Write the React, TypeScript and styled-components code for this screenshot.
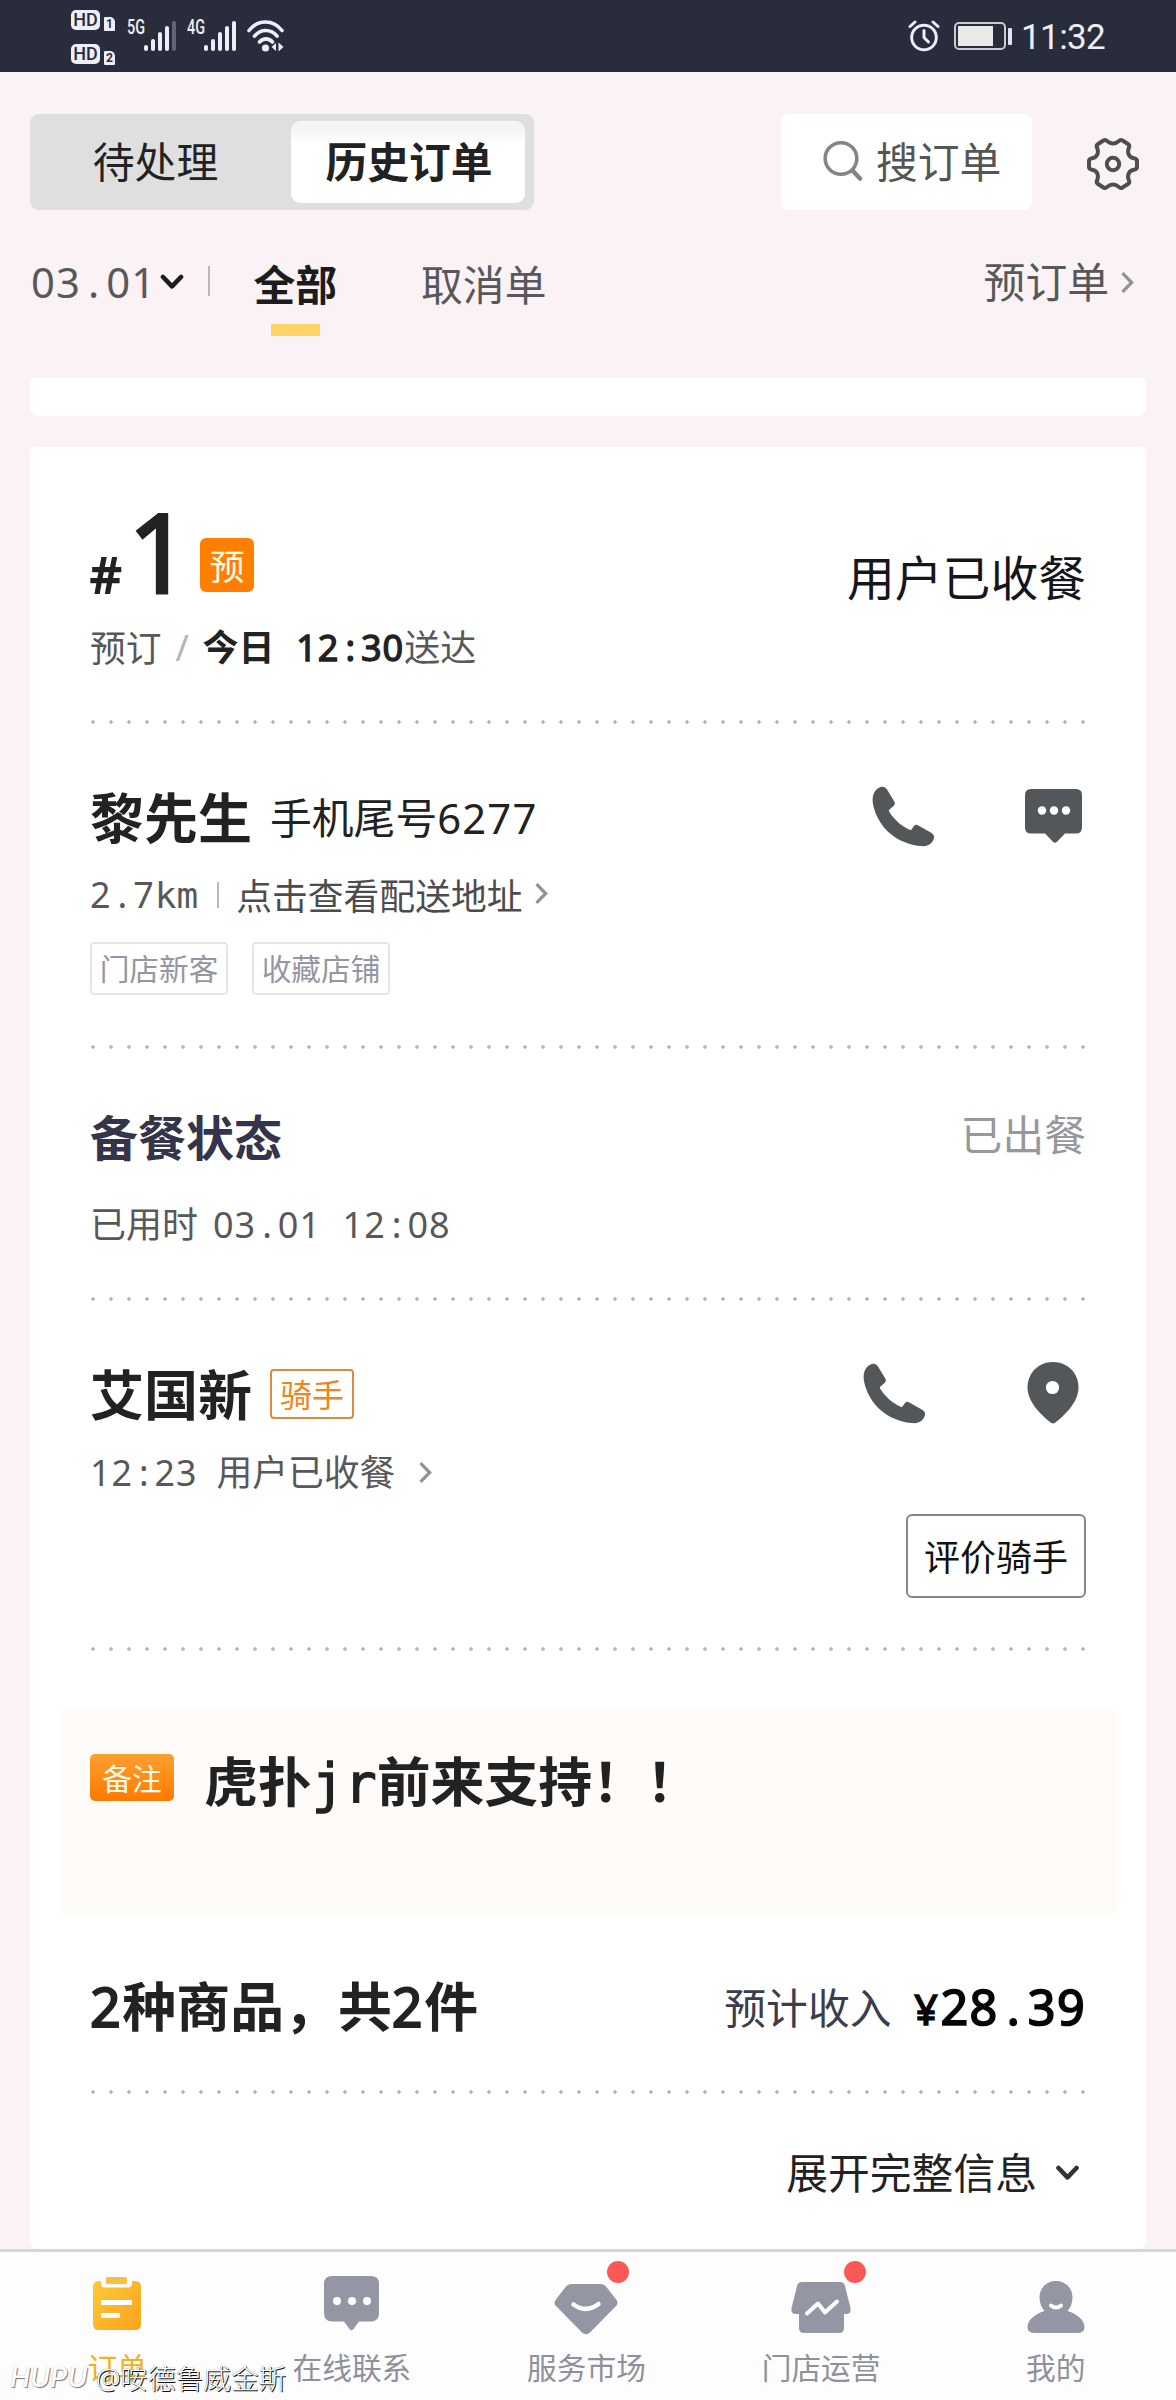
import React from "react";
import styled, { createGlobalStyle, css } from "styled-components";

const GlobalStyle = createGlobalStyle`
  * { box-sizing: border-box; }
  body {
    margin: 0;
    background: #fbf2f5;
    font-family: "Noto Sans", "Noto Sans CJK SC", sans-serif;
    color: #222;
  }
`;

const Screen = styled.div`
  width: 1176px;
  height: 2400px;
  display: flex;
  flex-direction: column;
  overflow: hidden;
  position: relative;
`;

/* ---------- shared text ---------- */

interface LabelProps {
  $size?: number;
  $color?: string;
  $bold?: boolean;
  $line?: number;
}

const Label = styled.span<LabelProps>`
  font-size: ${(p) => p.$size ?? 41.8}px;
  line-height: ${(p) => p.$line ?? 50}px;
  color: ${(p) => p.$color ?? "#222"};
  font-weight: ${(p) => (p.$bold ? 700 : 400)};
  white-space: pre;
`;

const emboldened = css`
  font-weight: 400;
  -webkit-text-stroke: 0.036em currentColor;
`;

const Digits = styled.span<{ $strong?: boolean }>`
  letter-spacing: 0.028em;
  ${(p) => p.$strong && emboldened}
`;

const Cell = styled.span<{ $strong?: boolean }>`
  display: inline-block;
  width: 0.6em;
  text-align: center;
  ${(p) => p.$strong && emboldened}
`;

const Latin = styled.span<{ $strong?: boolean }>`
  font-family: "DejaVu Sans Mono", monospace;
  font-weight: 400;
  ${(p) => p.$strong && css`-webkit-text-stroke: 0.024em currentColor;`}
`;

/* Fixed-pitch text: every latin character takes 0.6em. */
function Mono({ children, strong }: { children: string; strong?: boolean }) {
  const parts = children.match(/\d+|[a-z]+|[^\da-z]/g) ?? [];
  return (
    <>
      {parts.map((part, i) => {
        if (/\d/.test(part)) return <Digits key={i} $strong={strong}>{part}</Digits>;
        if (/[a-z]/.test(part)) return <Latin key={i} $strong={strong}>{part}</Latin>;
        return <Cell key={i} $strong={strong}>{part}</Cell>;
      })}
    </>
  );
}

/* ---------- status bar ---------- */

const StatusBar = styled.header`
  height: 72px;
  flex: none;
  background: #292c3a;
  display: flex;
  justify-content: space-between;
  padding: 0 71px 0 71px;
  color: #eeeefa;
`;

const StatusLeft = styled.div`
  display: flex;
  align-items: flex-start;
`;

const HdStack = styled.div`
  display: flex;
  flex-direction: column;
  gap: 13px;
  padding-top: 10px;
  width: 56px;
`;

const HdRow = styled.div`
  display: flex;
  align-items: flex-end;
  gap: 4px;
  height: 21px;
`;

const HdBox = styled.span`
  width: 29px;
  height: 20px;
  border-radius: 5px;
  background: #eeeefa;
  color: #292c3a;
  font: 500 18px/20px Roboto, sans-serif;
  text-align: center;
  margin-bottom: 1px;
`;

const SimBox = styled.span`
  width: 11px;
  height: 14px;
  border-radius: 1px 5px 1px 1px;
  background: #eeeefa;
  color: #292c3a;
  font: 700 12px/14px Roboto, sans-serif;
  text-align: center;
`;

const NetType = styled.span`
  font: 500 19.5px/20px Roboto, sans-serif;
  width: 17px;
  margin-top: 18px;
  span {
    display: inline-block;
    transform: scaleX(0.74);
    transform-origin: left;
  }
`;

const Bars = styled.div`
  display: flex;
  align-items: flex-end;
  gap: 3px;
  height: 31px;
  margin: 20px 11px 0 0;
`;

const Bar = styled.i<{ $h: number; $off?: boolean }>`
  width: 4px;
  height: ${(p) => p.$h}px;
  border-radius: 2px;
  background: ${(p) => (p.$off ? "#626573" : "#eeeefa")};
`;

const StatusRight = styled.div`
  display: flex;
  align-items: center;
`;

const Battery = styled.div`
  width: 52px;
  height: 28px;
  margin: 0 2px 0 14px;
  border: 2px solid #c9cad4;
  border-radius: 5px;
  padding: 2px;
  i {
    display: block;
    width: 35px;
    height: 20px;
    background: #e9e9e9;
  }
`;

const BatteryCap = styled.i`
  width: 4px;
  height: 17px;
  border-radius: 1px;
  background: #e4e4ef;
`;

const Clock = styled.span`
  font: 400 35px/40px Roboto, sans-serif;
  margin: 3px 0 0 9px;
  width: 84px;
  letter-spacing: -0.6px;
`;

function Signal({ type, weak }: { type: string; weak?: boolean }) {
  return (
    <>
      <NetType><span>{type}</span></NetType>
      <Bars>
        {[6, 12, 19, 25, 30].map((h, i) => (
          <Bar key={h} $h={h} $off={weak && i === 4} />
        ))}
      </Bars>
    </>
  );
}

/* ---------- header ---------- */

const TopRow = styled.div`
  display: flex;
  align-items: center;
  height: 96px;
  margin: 42px 37px 0 30px;
  flex: none;
`;

const Segmented = styled.div`
  width: 504px;
  height: 96px;
  border-radius: 9px;
  background: #dfdfdf;
  padding: 7px 9px 7px 0;
  display: flex;
  align-items: center;
`;

const Segment = styled.button<{ $active?: boolean }>`
  border: 0;
  padding: 0;
  font: inherit;
  height: 82px;
  border-radius: 9px;
  ${(p) =>
    p.$active
      ? css`
          width: 234px;
          padding-left: 2px;
          background: linear-gradient(#f5f5f5 0, #f5f5f5 10px, #fff 24px);
        `
      : css`
          width: 261px;
          padding-right: 10px;
          background: none;
        `}
`;

const Search = styled.div`
  margin-left: auto;
  width: 251px;
  height: 96px;
  border-radius: 8px;
  background: #fff;
  display: flex;
  align-items: center;
  gap: 12px;
  padding-left: 42px;
`;

const GearSlot = styled.div`
  margin-left: 55px;
  height: 50px;
`;

const FilterRow = styled.div`
  display: flex;
  align-items: flex-start;
  height: 121px;
  margin: 47px 42px 0 31px;
  flex: none;
`;

const DateFilter = styled.div`
  display: flex;
  align-items: center;
  gap: 4px;
  height: 50px;
`;

const VLine = styled.i<{ $h: number; $m: string }>`
  width: 2px;
  height: ${(p) => p.$h}px;
  margin: ${(p) => p.$m};
  background: #b9b7ba;
`;

const Tab = styled.div`
  display: flex;
  flex-direction: column;
  align-items: center;
  padding-top: 3px;
  margin-right: 84px;
`;

const TabBar = styled.i`
  width: 49px;
  height: 12px;
  margin-top: 14px;
  background: #fdd266;
`;

const PreOrder = styled.div`
  margin-left: auto;
  display: flex;
  align-items: center;
  gap: 12px;
  height: 50px;
`;

/* ---------- card ---------- */

const PrevCard = styled.div`
  height: 38px;
  flex: none;
  margin: 0 30px 31px;
  border-radius: 0 0 8px 8px;
  background: #fff;
`;

const Card = styled.main`
  flex: none;
  height: 1802px;
  margin: 0 30px;
  border-radius: 6px 6px 8px 8px;
  background: #fff;
`;

const Section = styled.section<{ $h: number; $top: number }>`
  height: ${(p) => p.$h}px;
  padding: ${(p) => p.$top}px 60px 0;
  display: flex;
  justify-content: space-between;
  align-items: flex-start;
`;

const Dotted = styled.hr`
  height: 4px;
  border: 0;
  margin: 0 61px;
  background: radial-gradient(circle at 2px 2px, #b4b4b4 1.4px, transparent 2.1px) 0 0 / 18px 4px repeat-x;
`;

const Column = styled.div<{ $gap?: number; $end?: boolean }>`
  display: flex;
  flex-direction: column;
  gap: ${(p) => p.$gap ?? 0}px;
  align-items: ${(p) => (p.$end ? "flex-end" : "flex-start")};
`;

const Row = styled.div<{ $gap?: number }>`
  display: flex;
  align-items: center;
  gap: ${(p) => p.$gap ?? 0}px;
`;

const OrderNo = styled.div`
  display: flex;
  align-items: baseline;
  height: 109px;
  font-weight: 400;
  line-height: 109px;
  font-size: 109px;
  small {
    font-size: 49px;
    width: 38px;
    -webkit-text-stroke: 1.8px currentColor;
  }
  b {
    font-weight: inherit;
    width: 72px;
    -webkit-text-stroke: 3px currentColor;
  }
`;

const PreBadge = styled.span`
  align-self: flex-end;
  width: 54px;
  height: 54px;
  margin-bottom: 13px;
  border-radius: 6px;
  background: #ff7f00;
  color: #fffbe9;
  font-size: 35px;
  line-height: 57px;
  text-align: center;
`;

const Slash = styled.span`
  width: 41px;
  font-size: 36px;
  line-height: 50px;
  text-align: center;
  color: #b5b5b5;
`;

const OrderState = styled.span`
  margin-top: 54px;
  font-size: 47.8px;
  line-height: 55px;
  color: #15151c;
`;

const Tags = styled.div`
  display: flex;
  gap: 24px;
  margin-top: -1px;
`;

const Tag = styled.span`
  width: 138px;
  height: 53px;
  border: 2px solid #e6e6ea;
  border-radius: 4px;
  color: #9596a5;
  font-size: 29.7px;
  line-height: 50px;
  text-align: center;
`;

const RiderTag = styled.span`
  width: 84px;
  height: 50px;
  border: 2px solid #dd8a3c;
  border-radius: 4px;
  color: #f08519;
  font-size: 32px;
  line-height: 48px;
  text-align: center;
  margin: 0 0 3px 18px;
`;

const GapBefore = styled.span<{ $w: number }>`
  margin-left: ${(p) => p.$w}px;
`;

const IconRow = styled.div<{ $gap: number; $right: number }>`
  display: flex;
  align-items: center;
  height: 62px;
  margin-top: -3px;
  gap: ${(p) => p.$gap}px;
  padding-right: ${(p) => p.$right}px;
`;

const RateButton = styled.button`
  width: 180px;
  height: 84px;
  margin-top: 90px;
  border: 2px solid #878787;
  border-radius: 6px;
  background: #fff;
  color: #111;
  font: 400 36px/78px "Noto Sans", "Noto Sans CJK SC", sans-serif;
  padding: 3px 0 0;
`;

const Note = styled.div`
  margin: 59px 29px 0 30px;
  height: 205px;
  padding: 44px 30px 0;
  background: linear-gradient(#fefbf8 0 190px, #fdfdf8 190px);
  display: flex;
  align-items: flex-start;
`;

const NoteBadge = styled.span`
  width: 84px;
  height: 47px;
  border-radius: 5px;
  background: linear-gradient(#ff9f31, #ff7a00);
  color: #fffbe9;
  font-size: 29.7px;
  line-height: 49px;
  text-align: center;
  margin-right: 30px;
`;

const NoteText = styled(Label)`
  margin-top: -3px;
`;

const Price = styled.span`
  font-size: 48.5px;
  line-height: 60px;
  color: #060606;
  margin-left: 20px;
  small {
    display: inline-block;
    font-size: 41px;
    width: 29px;
    text-align: center;
    -webkit-text-stroke: 1.6px currentColor;
  }
`;

/* ---------- bottom navigation ---------- */

const Nav = styled.nav`
  flex: none;
  height: 151px;
  border-top: 3px solid #d6d6d8;
  background: #fdfdfe;
  padding-right: 3px;
  display: grid;
  grid-template-columns: repeat(5, 1fr);
`;

const NavItem = styled.div<{ $active?: boolean }>`
  display: flex;
  flex-direction: column;
  align-items: center;
  padding-top: 20px;
  font-size: 29.7px;
  line-height: 36px;
  color: ${(p) => (p.$active ? "#f2b01e" : "#8f909c")};
`;

const NavIcon = styled.div`
  position: relative;
  height: 66px;
  margin-bottom: 12px;
`;

const Dot = styled.i`
  position: absolute;
  left: 53px;
  top: -11px;
  width: 22px;
  height: 22px;
  border-radius: 50%;
  background: #fb5958;
`;

const Watermark = styled.div`
  position: absolute;
  left: 10px;
  bottom: 4px;
  display: flex;
  align-items: center;
  gap: 8px;
  color: #fff;
  font-size: 27.6px;
  font-weight: 300;
  line-height: 36px;
  text-shadow: 1px 1px 0 #111, 0 0 1px #555;
`;

const WatermarkLogo = styled.span`
  font: italic 500 27px/36px Inter, "Noto Sans", sans-serif;
  width: 78px;
  text-shadow: 1px 1px 1px #777, 0 0 1px #aaa;
`;

/* ---------- icons ---------- */

const ChevronDown = ({ w = 24, color = "#1d1d1f" }) => (
  <svg width={w} height="16" viewBox="0 0 24 16" fill="none" stroke={color} strokeWidth="4.6" strokeLinecap="round" strokeLinejoin="round">
    <path d="M3 3l9 9.4L21 3" />
  </svg>
);

const ChevronRight = ({ color = "#929294" }) => (
  <svg width="13" height="21" viewBox="0 0 13 21" fill="none" stroke={color} strokeWidth="3.2" strokeLinejoin="miter">
    <path d="M1.5 1.2l9.200 9.300-9.200 9.300" />
  </svg>
);

const PhoneIcon = () => (
  <svg width="63" height="61" viewBox="0 0 63 61" fill="#54575a">
    <path d="M6 2.300C9.500-.3 13 .4 15 3.500L22.300 15.400C23.600 17.500 22.600 19.200 21 20.500L17.200 23.700C16.700 24.200 16.800 25 17.200 25.700C23 34.500 29.500 40 37.500 43.700C38.500 44.200 39.200 44 39.700 43.200L41.600 40.500C42.900 38.800 44.600 38.400 46.400 39.400L59.200 46.700C62.700 48.600 62.800 52 60.500 55.500C57.600 59.600 53.500 60.600 48 60C25 57.500 7 42.500 1.500 20.500C-.4 12.500 .5 6.500 6 2.300Z" />
  </svg>
);

const ChatIcon = () => (
  <svg width="57" height="54" viewBox="0 0 57 54">
    <path fill="#54575a" d="M6 0H51Q57 0 57 6V38.500Q57 44.500 51 44.500H40L32 52.800Q30 54.800 28 52.800L20 44.500H6Q0 44.500 0 38.500V6Q0 0 6 0Z" />
    <g fill="#fff">
      <circle cx="17" cy="21.500" r="4.200" />
      <circle cx="29" cy="21.500" r="4.200" />
      <circle cx="41" cy="21.500" r="4.200" />
    </g>
  </svg>
);

const PinIcon = () => (
  <svg width="52" height="62" viewBox="0 0 52 62">
    <path fill="#54575a" d="M26 0C40.500 0 51.500 11 51.500 25.500C51.500 40 38 53 28 60.800Q26 62.300 24 60.800C14 53 .5 40 .5 25.500C.5 11 11.500 0 26 0Z" />
    <circle cx="25.500" cy="25.500" r="6.600" fill="#fff" />
  </svg>
);

const SearchIcon = () => (
  <svg width="41" height="44" viewBox="0 0 41 44" fill="none" stroke="#858585" strokeLinecap="round">
    <circle cx="18" cy="18.500" r="15.800" strokeWidth="3.600" />
    <path d="M29.500 30.500l7.500 8" strokeWidth="4.600" />
  </svg>
);

const GearIcon = () => (
  <svg width="52" height="54" viewBox="0 -2 52 54" fill="none" stroke="#4e4e50" strokeWidth="4" strokeLinejoin="round">
    <path d="M16.500 1.500Q18.500 .3 20 2Q26 7 32 2Q33.500 .3 35.500 1.500L41 5Q43 6.300 42 8.500C39.700 14 42 18.600 47 19.200Q50 19.800 50 22V28Q50 30.200 47 30.800C42 31.400 39.700 36 42 41.500Q43 43.700 41 45L35.500 48.500Q33.500 49.700 32 48Q26 43 20 48Q18.500 49.700 16.500 48.500L11 45Q9 43.700 10 41.500C12.300 36 10 31.400 5 30.800Q2 30.200 2 28V22Q2 19.800 5 19.200C10 18.600 12.300 14 10 8.500Q9 6.300 11 5Z" />
    <circle cx="26" cy="25" r="6.200" />
  </svg>
);

const WifiSlot = styled.div`
  margin-top: 20px;
`;

const WifiIcon = () => (
  <svg width="38" height="32" viewBox="0 0 38 32" fill="none" stroke="#eeeefa" strokeLinecap="round">
    <path d="M2 10.500C11-.8 26-.8 35 10.500M7.500 16.200c6.300-7.600 16.300-7.600 22.600 0M12.500 22c3.800-4.200 9.200-4.200 13 0" strokeWidth="3.600" />
    <circle cx="18.500" cy="28" r="3.600" fill="#eeeefa" stroke="none" />
    <path d="M29 23v8l-4.500-4zM31.500 31.500v-9l5 4.500z" fill="#eeeefa" stroke="none" />
  </svg>
);

const AlarmIcon = () => (
  <svg width="32" height="32" viewBox="0 0 32 32" fill="none" stroke="#eeeefa" strokeLinecap="round" strokeLinejoin="round">
    <circle cx="16" cy="17.500" r="12.300" strokeWidth="3" />
    <path d="M16 10.500v7l4.500 4.500" strokeWidth="3" />
    <path d="M2 6.500l5-4.500M30 6.500l-5-4.500" strokeWidth="3" />
  </svg>
);

const GREY = "#9496a4";

const OrderNavIcon = () => (
  <svg width="50" height="58" viewBox="0 0 50 58">
    <defs>
      <linearGradient id="gold" x1="0" y1="0" x2="1" y2="1">
        <stop offset="0" stopColor="#ffc93a" />
        <stop offset="1" stopColor="#fba21c" />
      </linearGradient>
    </defs>
    <path fill="url(#gold)" d="M6 9H9V11.500Q9 15.500 13 15.500H36Q40 15.500 40 11.500V9H43Q49 9 49 15V52Q49 58 43 58H7Q1 58 1 52V15Q1 9 6 9Z" />
    <rect x="14" y="5" width="21" height="7" rx="1.500" fill="#fcbd45" />
    <rect x="9" y="28" width="31" height="5" rx="1" fill="#fff" />
    <rect x="9" y="41" width="19" height="5" rx="1" fill="#fff" />
  </svg>
);

const ChatNavIcon = () => (
  <svg width="57" height="59" viewBox="0 -2 57 59">
    <path fill={GREY} d="M9 2H48Q56 2 56 10V39Q56 47.500 48 47.500H36L30.500 55Q28.500 57.500 26.500 55L21 47.500H9Q1 47.500 1 39V10Q1 2 9 2Z" />
    <g fill="#fff">
      <circle cx="14" cy="27" r="4" />
      <circle cx="29" cy="27" r="4" />
      <circle cx="44" cy="27" r="4" />
    </g>
  </svg>
);

const MarketNavIcon = () => (
  <svg width="64" height="63" viewBox="0 0 64 63">
    <path fill={GREY} d="M17 12H47Q50 12 52 14.500L62.500 28Q64.500 31 62.500 33.500L36 60.500Q32 64 28 60.500L1.500 33.500Q-.5 31 1.500 28L12 14.500Q14 12 17 12Z" />
    <path d="M19.500 32.500Q32 41.500 44.500 32" fill="none" stroke="#fff" strokeWidth="4.500" strokeLinecap="round" />
  </svg>
);

const ShopNavIcon = () => (
  <svg width="60" height="62" viewBox="0 0 60 62">
    <path fill={GREY} d="M11 10H49Q53 10 54 14L59.500 36Q60.500 42 55 42H53V56Q53 61 48 61H13Q8 61 8 56V42H5Q-.5 42 .5 36L6 14Q7 10 11 10Z" />
    <path d="M16 41.500L27 31.500L34 40.500L46 29.500" fill="none" stroke="#fff" strokeWidth="4" strokeLinecap="round" strokeLinejoin="round" />
  </svg>
);

const MeNavIcon = () => (
  <svg width="58" height="62" viewBox="0 0 58 62">
    <path fill={GREY} d="M29 9C38.500 9 45.500 16 45.500 25.500C45.500 31 43.500 35.500 40.500 39C49 41.500 57.500 47.500 57.500 55Q57.500 61 50 61H8Q.5 61 .5 55C.5 47.500 9 41.500 17.500 39C14.500 35.500 12.500 31 12.500 25.500C12.500 16 19.500 9 29 9Z" />
    <path d="M24 33.500Q29 37.500 34 33.500" fill="none" stroke="#fff" strokeWidth="4" strokeLinecap="round" />
  </svg>
);

const NAV = [
  { label: "订单", Icon: OrderNavIcon, active: true },
  { label: "在线联系", Icon: ChatNavIcon },
  { label: "服务市场", Icon: MarketNavIcon, dot: true },
  { label: "门店运营", Icon: ShopNavIcon, dot: true },
  { label: "我的", Icon: MeNavIcon },
];

export default function App() {
  return (
    <Screen>
      <GlobalStyle />
      <StatusBar>
        <StatusLeft>
          <HdStack>
            <HdRow><HdBox>HD</HdBox><SimBox>1</SimBox></HdRow>
            <HdRow><HdBox>HD</HdBox><SimBox>2</SimBox></HdRow>
          </HdStack>
          <Signal type="5G" weak />
          <Signal type="4G" />
          <WifiSlot><WifiIcon /></WifiSlot>
        </StatusLeft>
        <StatusRight>
          <AlarmIcon />
          <Battery><i /></Battery>
          <BatteryCap />
          <Clock>11:32</Clock>
        </StatusRight>
      </StatusBar>

      <TopRow>
        <Segmented>
          <Segment><Label>待处理</Label></Segment>
          <Segment $active><Label $bold>历史订单</Label></Segment>
        </Segmented>
        <Search>
          <SearchIcon />
          <Label $color="#555">搜订单</Label>
        </Search>
        <GearSlot><GearIcon /></GearSlot>
      </TopRow>

      <FilterRow>
        <DateFilter>
          <Label $color="#58585a"><Mono>03.01</Mono></Label>
          <ChevronDown />
        </DateFilter>
        <VLine $h={30} $m="9px 43px 0 24px" />
        <Tab>
          <Label $bold $color="#1c1c1c">全部</Label>
          <TabBar />
        </Tab>
        <Tab>
          <Label $color="#58585a">取消单</Label>
        </Tab>
        <PreOrder>
          <Label $color="#58585a">预订单</Label>
          <ChevronRight />
        </PreOrder>
      </FilterRow>

      <PrevCard />

      <Card>
        <Section $h={273} $top={49}>
          <Column $gap={18}>
            <OrderNo>
              <small>#</small>
              <b>1</b>
              <PreBadge>预</PreBadge>
            </OrderNo>
            <Row>
              <Label $size={35.8} $color="#58585a">预订</Label>
              <Slash>/</Slash>
              <Label $size={36} $bold>今日<Mono strong> 12:30</Mono></Label>
              <Label $size={36} $color="#58585a">送达</Label>
            </Row>
          </Column>
          <OrderState>用户已收餐</OrderState>
        </Section>
        <Dotted />

        <Section $h={321} $top={64}>
          <Column $gap={22}>
            <Row $gap={18}>
              <Label $size={54} $line={60} $bold>黎先生</Label>
              <Label $line={60}>手机尾号<Mono>6277</Mono></Label>
            </Row>
            <Row>
              <Label $size={36} $color="#58585a"><Mono>2.7km</Mono></Label>
              <VLine $h={26} $m="0 17px 2px 19px" />
              <Label $size={35.8} $color="#4c4c4e">点击查看配送地址</Label>
              <GapBefore $w={12}><ChevronRight /></GapBefore>
            </Row>
            <Tags>
              <Tag>门店新客</Tag>
              <Tag>收藏店铺</Tag>
            </Tags>
          </Column>
          <IconRow $gap={90} $right={4}>
            <PhoneIcon />
            <ChatIcon />
          </IconRow>
        </Section>
        <Dotted />

        <Section $h={248} $top={64}>
          <Column $gap={37}>
            <Label $size={48} $bold $color="#34344a">备餐状态</Label>
            <Label $size={36} $color="#58585a">已用时<GapBefore $w={15}><Mono>03.01 12:08</Mono></GapBefore></Label>
          </Column>
          <Label $line={44} $color="#97979f">已出餐</Label>
        </Section>
        <Dotted />

        <Section $h={346} $top={64}>
          <Column $gap={22}>
            <Row>
              <Label $size={54} $line={60} $bold>艾国新</Label>
              <RiderTag>骑手</RiderTag>
            </Row>
            <Row $gap={24}>
              <Label $size={35.8} $color="#58585a"><Mono>12:23</Mono><GapBefore $w={19}>用户已收餐</GapBefore></Label>
              <ChevronRight />
            </Row>
          </Column>
          <Column $end>
            <IconRow $gap={101} $right={7}>
              <PhoneIcon />
              <PinIcon />
            </IconRow>
            <RateButton>评价骑手</RateButton>
          </Column>
        </Section>
        <Dotted />

        <Note>
          <NoteBadge>备注</NoteBadge>
          <NoteText $size={53.9} $line={60} $bold>虎扑<Mono strong>jr</Mono>前来支持！！</NoteText>
        </Note>

        <Section $h={175} $top={61}>
          <Label $size={53.9} $line={60} $bold><Mono strong>2</Mono>种商品，共<Mono strong>2</Mono>件</Label>
          <Row>
            <Label $line={60} $color="#3c3c4c">预计收入</Label>
            <Price><small>¥</small><Mono strong>28.39</Mono></Price>
          </Row>
        </Section>
        <Dotted />

        <Section $h={155} $top={54}>
          <span />
          <Row $gap={12}>
            <Label>展开完整信息</Label>
            <ChevronDown w={37} color="#333" />
          </Row>
        </Section>
      </Card>

      <Nav>
        {NAV.map(({ label, Icon, active, dot }) => (
          <NavItem key={label} $active={active}>
            <NavIcon>
              <Icon />
              {dot && <Dot />}
            </NavIcon>
            {label}
          </NavItem>
        ))}
      </Nav>

      <Watermark>
        <WatermarkLogo>HUPU</WatermarkLogo>
        <span>@咹德鲁威金斯</span>
      </Watermark>
    </Screen>
  );
}
